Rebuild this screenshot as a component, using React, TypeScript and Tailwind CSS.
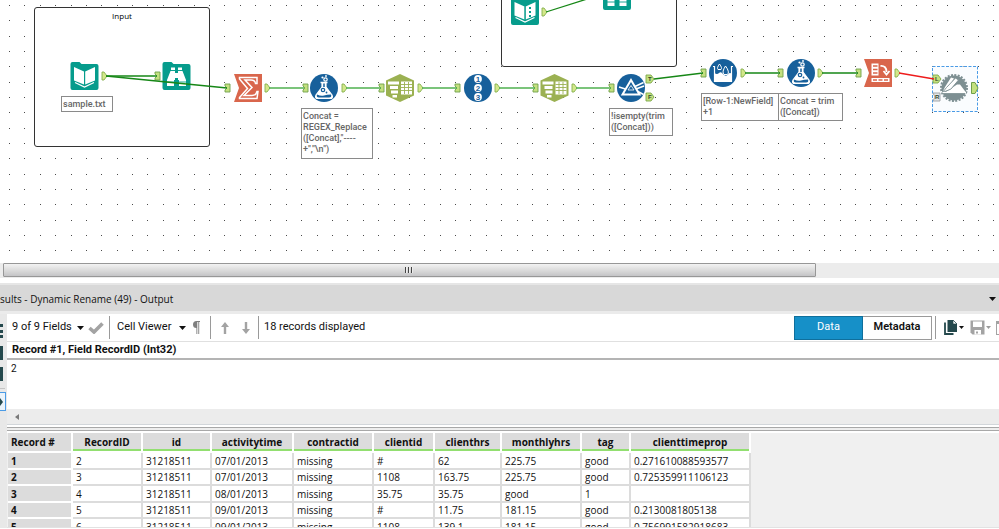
import React from "react";

const range = (n: number) => Array.from({ length: n }, (_, i) => i);

const gridPath = range(130)
  .flatMap((c) => range(17).map((r) => `M${Math.round(9 + c * 15.38)} ${Math.round(5 + r * 15.34)}h1v1h-1z`))
  .join("");

type At = { x: number; y: number };

const InAnchor = ({ x, y }: At) => (
  <path d={`M${x - 4} ${y - 4}h5v8h-5v-2l2-2l-2-2z`} fill="#c3e07f" stroke="#6f9f4a" strokeWidth="0.9" />
);

const OutAnchor = ({ x, y }: At) => (
  <path d={`M${x} ${y - 4}h2l3 4l-3 4h-2z`} fill="#d3e88a" stroke="#86b04e" strokeWidth="0.9" />
);

const Wire = ({ from, to, color = "#4fb04f" }: { from: At; to: At; color?: string }) => (
  <line x1={from.x} y1={from.y} x2={to.x} y2={to.y} stroke={color} strokeWidth="1.3" />
);

const Tool = ({ x, y, children }: At & { children: React.ReactNode }) => (
  <g transform={`translate(${x} ${y})`}>{children}</g>
);

const TealCard = () => (
  <path d="M-14 -12q0-2 2-2h7l2 2h15q2 0 2 2v22q0 2-2 2h-24q-2 0-2-2z" fill="#069c8c" />
);

const BookIcon = ({ x, y, dotted = false }: At & { dotted?: boolean }) => (
  <Tool x={x} y={y}>
    <TealCard />
    <path d="M-10.500 -9L-0.500 -4.500V8.500L-10.500 4.500z M10.500 -9L0.700 -4.500V8.500L10.500 4.500z" fill="#fff" />
    <path d="M-9.500 6.500L0 11L9.500 6.500" fill="none" stroke="#fff" strokeWidth="1.200" />
    <path d="M0 -4.500V8.500" stroke="#069c8c" strokeWidth="0.800" />
    {dotted && <path d="M5 -4V6" stroke="#069c8c" strokeWidth="2" strokeDasharray="2 2" />}
  </Tool>
);

const BinocularsIcon = ({ x, y }: At) => (
  <Tool x={x} y={y}>
    <TealCard />
    <path d="M-5.500 -8.500h4v3h-4z M1.500 -8.500h4v3h-4z" fill="#fff" />
    <path d="M-6 -5h4.500v9h-1v6h-7v-6z M6 -5h-4.500v9h1v6h7v-6z" fill="#fff" />
    <path d="M-2 -3h4v5h-4z" fill="#fff" />
    <path d="M-10 6h8 M2 6h8 M-5.500 -5.500h4 M1.500 -5.500h4" stroke="#069c8c" strokeWidth="0.900" />
  </Tool>
);

const SummarizeIcon = ({ x, y }: At) => (
  <Tool x={x} y={y}>
    <path d="M-14 -14H14V14H-14L-9 0z" fill="#d9664c" />
    <path
      d="M-8.500 -10.500H9V-4.500H7.500Q7 -8 3 -8H-3L4 -0.500L-4 7.500H4Q8 7.500 9 3.500H10L9 10.500H-8.500V9.500L-0.500 0.500L-8.500 -9z"
      fill="#d9664c"
      stroke="#fff"
      strokeWidth="1.500"
    />
  </Tool>
);

const FlaskIcon = ({ x, y }: At) => (
  <Tool x={x} y={y}>
    <circle r="14" fill="#17609b" />
    <path d="M-2 -5V-1L-8 7Q-9.500 10.500 -6 10.500H6Q9.500 10.500 8 7L2 -1V-5z" fill="#fff" stroke="#fff" strokeWidth="1.200" />
    <path d="M-3.500 -5.500H3.500" stroke="#fff" strokeWidth="1.500" />
    <path d="M0 -4.500V-1" stroke="#17609b" strokeWidth="1.500" />
    <path d="M-7 6.500Q-3 8.500 0 7.500T7 6.500Q8 9.500 5 9.500H-5Q-8 9.500 -7 6.500z" fill="#17609b" />
    <circle cx="-1" cy="2" r="1.700" fill="none" stroke="#17609b" strokeWidth="1.200" />
    <circle cx="2.500" cy="4.500" r="0.900" fill="#17609b" />
    <circle cx="1.500" cy="-8.500" r="1.700" fill="none" stroke="#fff" strokeWidth="1.200" />
    <circle cx="-1.500" cy="-10.500" r="1.100" fill="#fff" />
    <circle cx="2" cy="-12" r="0.900" fill="#fff" />
  </Tool>
);

const ParseIcon = ({ x, y }: At) => (
  <Tool x={x} y={y}>
    <path d="M0 -14L14 -7.500V7.500L0 14L-14 7.500V-7.500z" fill="#9bb152" />
    <path d="M-12 -6.500H-1V-3.500H-12z M-10 -2H-2V1H-10z M-9 2.500H-2V5.500H-9z M-7.500 7H-3V9.500H-7.500z" fill="#fff" />
    <path d="M1 -6.500h11v13h-11z" fill="#fff" />
    <path d="M1 -3.500H12 M1 -0.500H12 M1 2.500H12 M4.500 -6V6 M8.500 -6V6" stroke="#9bb152" strokeWidth="0.900" />
  </Tool>
);

const RecordIdIcon = ({ x, y }: At) => (
  <Tool x={x} y={y}>
    <circle r="14" fill="#17609b" />
    {[-9, 0, 9].map((cy, i) => (
      <g key={cy}>
        <circle cy={cy} r="3.900" fill="#fff" />
        <text y={cy + 3} textAnchor="middle" className="fill-[#17609b] font-['Liberation_Sans',sans-serif] text-[8px] font-bold">
          {i + 1}
        </text>
      </g>
    ))}
  </Tool>
);

const FilterIcon = ({ x, y }: At) => (
  <Tool x={x} y={y}>
    <circle r="14" fill="#17609b" />
    <path d="M-12 -1L-4 1.500 M4 -1.500L12.500 -5.500 M5 1L13 -2 M6 3L12.500 6.500" stroke="#fff" strokeWidth="1.500" />
    <path d="M0 -8L8.500 6.500H-8.500z" fill="#17609b" stroke="#fff" strokeWidth="2" />
    <path d="M-3 2L0 -2.500L3 2z" fill="#17609b" stroke="#fff" strokeWidth="0.800" />
  </Tool>
);

const MultiRowIcon = ({ x, y }: At) => (
  <Tool x={x} y={y}>
    <circle r="14" fill="#17609b" />
    <path d="M-10 -6.500H-8.500V8.500H8.500V-6.500H10" fill="none" stroke="#fff" strokeWidth="1.200" />
    <path d="M-8.500 0Q-6 2 -4 0T0 1Q3 4 5 1.500T8.500 1V8.500H-8.500z" fill="#fff" />
    <path d="M-3.500 -9Q-0.500 -5 -2 -3.500H-5Q-6.500 -5 -3.500 -9z" fill="#17609b" stroke="#fff" />
    <path d="M2.500 -7Q7 -1 4.500 1.500H1Q-1.500 -1 2.500 -7z" fill="#17609b" stroke="#fff" />
  </Tool>
);

const CrossTabIcon = ({ x, y }: At) => (
  <Tool x={x} y={y}>
    <path d="M-14 -14H14V14H-14L-9 0z" fill="#d9664c" />
    <path d="M-6.500 -9.500h7v12h-7z M-6.500 5h18v4h-18z" fill="#fff" />
    <path d="M-5 -7h4.500 M-5 -3.500h4.500 M-5 0h4.500 M-5 7h4 M0.500 7h4 M6 7h4" stroke="#d9664c" strokeWidth="1.500" />
    <path d="M2.500 -7Q8.500 -7.500 8.500 -1 M5.500 -2L8.500 1.500L11.500 -2" fill="none" stroke="#fff" strokeWidth="1.800" />
  </Tool>
);

const DynamicRenameIcon = ({ x, y }: At) => (
  <Tool x={x} y={y}>
    <circle r="12.500" fill="#7d8f92" />
    <circle r="13" fill="none" stroke="#7d8f92" strokeWidth="2" strokeDasharray="2 1.400" />
    <path d="M-9 4.500L3 -3.500H6L12 4.500z" fill="#fff" />
    <path d="M-11 3L-9 -1L-3 -10.500L0 -9.500L-7 1z" fill="#fff" />
    <path d="M-11.500 4.500L-7.500 -0.500L1.500 -10L4.500 -8L-3 1z" fill="#fff" stroke="#7d8f92" strokeWidth="0.900" />
    <path d="M-11.500 4.500H12" stroke="#fff" strokeWidth="1.200" />
  </Tool>
);

const LetterAnchor = ({ x, y, letter, gray = false }: At & { letter: string; gray?: boolean }) => (
  <g>
    <path
      d={gray ? `M${x} ${y - 4}h7v8h-7l2-4z` : `M${x} ${y - 4}h5l3 4l-3 4h-5z`}
      fill={gray ? "#e4e6e8" : "#c3e07f"}
      stroke={gray ? "#9a9ea2" : "#7da84a"}
      strokeWidth="0.900"
    />
    <text x={x + 2} y={y + 2} className="fill-[#33472a] font-['Liberation_Sans',sans-serif] text-[6px] font-bold">
      {letter}
    </text>
  </g>
);

const dark = "#168716";

const Workflow = () => (
  <svg className="absolute top-0 left-0 h-full w-full" aria-label="Workflow">
    <rect x="932.500" y="66.500" width="45" height="45" fill="#fafcfe" stroke="#4a9be6" strokeDasharray="3 1.500" />
    <BookIcon x={84.5} y={76} />
    <BinocularsIcon x={176.5} y={76} />
    <BookIcon x={525} y={11} dotted />
    <BinocularsIcon x={617} y={-4} />
    <SummarizeIcon x={248} y={88} />
    <FlaskIcon x={324} y={88} />
    <ParseIcon x={400} y={88} />
    <RecordIdIcon x={478} y={88} />
    <ParseIcon x={554.5} y={88} />
    <FilterIcon x={631} y={88} />
    <MultiRowIcon x={723} y={73} />
    <FlaskIcon x={801} y={73} />
    <CrossTabIcon x={878} y={73} />
    <DynamicRenameIcon x={954} y={88} />
    {[
      [159, 76], [229, 88], [307, 88], [383, 88], [459, 88], [537, 88], [613, 88], [705, 73], [782, 73], [860, 73],
    ].map(([x, y]) => (
      <InAnchor key={x} x={x} y={y} />
    ))}
    {[
      [102, 76], [265, 88], [342, 88], [418, 88], [495, 88], [572, 88], [542, 12], [741, 73], [818, 73], [895, 73],
    ].map(([x, y]) => (
      <OutAnchor key={x} x={x} y={y} />
    ))}
    <LetterAnchor x={646} y={79} letter="T" />
    <LetterAnchor x={646} y={97} letter="F" />
    <LetterAnchor x={933} y={79} letter="L" />
    <LetterAnchor x={933} y={97} letter="R" gray />
    <path d="M971.500 82.500h3.500l3 5.500l-3 5.500h-3.500z" fill="#c3e07f" stroke="#6f9f4a" />
    <Wire from={{ x: 106, y: 76 }} to={{ x: 157, y: 76 }} color={dark} />
    <Wire from={{ x: 106, y: 76 }} to={{ x: 227, y: 88 }} color={dark} />
    <Wire from={{ x: 269, y: 88 }} to={{ x: 304, y: 88 }} />
    <Wire from={{ x: 346, y: 88 }} to={{ x: 381, y: 88 }} />
    <Wire from={{ x: 422, y: 88 }} to={{ x: 457, y: 88 }} />
    <Wire from={{ x: 499, y: 88 }} to={{ x: 535, y: 88 }} />
    <Wire from={{ x: 576, y: 88 }} to={{ x: 611, y: 88 }} />
    <Wire from={{ x: 546, y: 12 }} to={{ x: 603, y: -6 }} color={dark} />
    <Wire from={{ x: 654, y: 79 }} to={{ x: 703, y: 73 }} color={dark} />
    <Wire from={{ x: 745, y: 73 }} to={{ x: 780, y: 73 }} color={dark} />
    <Wire from={{ x: 822, y: 73 }} to={{ x: 858, y: 73 }} color={dark} />
    <Wire from={{ x: 899, y: 73 }} to={{ x: 934, y: 79 }} color="#ee1c1c" />
  </svg>
);

const Note = ({ className, lines }: { className: string; lines: string[] }) => (
  <div
    className={`absolute border border-[#8a8a8a] bg-white pt-[2px] pl-px font-['Roboto',sans-serif] text-[9px] leading-[11px] font-medium whitespace-nowrap text-[#666] ${className}`}
  >
    {lines.map((l) => (
      <div key={l}>{l}</div>
    ))}
  </div>
);

const Canvas = () => (
  <section className="relative h-[263px] overflow-hidden bg-white">
    <svg className="absolute top-0 left-0 h-full w-full" aria-hidden="true">
      <path d={gridPath} fill="#4a4a4a" shapeRendering="crispEdges" />
    </svg>
    <div className="absolute top-[7px] left-[34px] h-[140px] w-[176px] rounded-[3px] border border-[#333] bg-white text-center font-['Open_Sans',sans-serif] text-[8px] leading-[15px] text-black">
      Input
    </div>
    <div className="absolute -top-[73px] left-[501px] h-[140px] w-[176px] rounded-[3px] border border-[#333] bg-white" />
    <Note className="top-[96px] left-[61px] h-[16px] w-[52px]" lines={["sample.txt"]} />
    <Note className="top-[108px] left-[301px] h-[51px] w-[72px]" lines={["Concat =", "REGEX_Replace", '([Concat],"----', '+","\\n")']} />
    <Note className="top-[108px] left-[609px] h-[28px] w-[64px]" lines={["!isempty(trim", "([Concat]))"]} />
    <Note className="top-[93px] left-[701px] h-[28px] w-[82px]" lines={["[Row-1:NewField]", "+1"]} />
    <Note className="top-[93px] left-[778px] h-[28px] w-[65px]" lines={["Concat = trim", "([Concat])"]} />
    <Workflow />
  </section>
);

const Caret = ({ small = false }: { small?: boolean }) => (
  <svg className={`pointer-events-none shrink-0 ${small ? "h-[3px] w-[5px]" : "h-1 w-[7px]"}`} viewBox="0 0 7 4" aria-hidden="true">
    <path d="M0 0h7L3.500 4z" fill="currentColor" />
  </svg>
);

const Separator = () => <div className="h-[23px] w-px shrink-0 bg-[#9a9a9a]" />;

const DropDown = ({ label, text, className }: { label: string; text: string; className: string }) => (
  <div className="flex items-center">
    <select aria-label={label} className={`h-5 appearance-none bg-transparent p-0 outline-none ${className}`}>
      <option>{text}</option>
    </select>
    <Caret />
  </div>
);

const ArrowIcon = ({ down = false }: { down?: boolean }) => (
  <svg className={`h-3 w-2 ${down ? "rotate-180" : ""}`} viewBox="0 0 8 12" aria-hidden="true">
    <path d="M4 0L8 5H5.200V12H2.800V5H0z" fill="#a3a3a3" />
  </svg>
);

const Toolbar = () => (
  <div className="flex h-[28px] items-center border-b border-[#e0e0e0] bg-white pl-[5px]">
    <DropDown label="Fields" text="9 of 9 Fields" className="w-[65px]" />
    <button aria-label="Apply" className="ml-1">
      <svg className="h-3 w-4" viewBox="0 0 16 12" aria-hidden="true">
        <path d="M1.500 6L6 10L14.500 1.500" fill="none" stroke="#a3a3a3" strokeWidth="3.600" />
      </svg>
    </button>
    <div className="w-[5px]" />
    <Separator />
    <div className="w-[7px]" />
    <DropDown label="Viewer" text="Cell Viewer" className="w-[62px]" />
    <button aria-label="Show whitespace" className="mr-[10px] ml-[7px]">
      <svg className="h-[13px] w-[7px]" viewBox="0 0 7 13" aria-hidden="true">
        <path d="M3.500 0H7V1H6.200V13H5.300V1H4.300V13H3.400V7Q0 7 0 3.500Q0 0 3.500 0z" fill="#7f7f7f" />
      </svg>
    </button>
    <Separator />
    <button aria-label="Previous record" className="ml-[10px]">
      <ArrowIcon />
    </button>
    <button aria-label="Next record" className="mr-2 ml-[13px]">
      <ArrowIcon down />
    </button>
    <Separator />
    <span className="ml-[5px] whitespace-nowrap">18 records displayed</span>
    <div className="ml-auto flex h-6">
      <button className="w-[69px] border border-[#0f6f9c] bg-[#1690c8] text-white">Data</button>
      <button className="w-[69px] border border-l-0 border-[#9a9a9a] bg-white font-semibold">Metadata</button>
    </div>
    <div className="w-[3px]" />
    <Separator />
    <button aria-label="Copy" className="ml-2 flex items-center gap-px">
      <svg className="h-[15px] w-[14px]" viewBox="0 0 14 15" aria-hidden="true">
        <path d="M3.500 0H9L13 4V12H3.500z" fill="#24484c" />
        <path d="M9 0V4H13z" fill="#fff" stroke="#24484c" strokeWidth="0.700" />
        <path d="M1 2.500V14H9.500" fill="none" stroke="#24484c" strokeWidth="1.800" />
      </svg>
      <Caret small />
    </button>
    <button aria-label="Save" className="ml-[6px] flex items-center gap-px text-[#9a9a9a]">
      <svg className="h-[15px] w-[15px]" viewBox="0 0 15 15" aria-hidden="true">
        <path d="M0.500 0.500H14.500V14.500H2.500L0.500 12.500z" fill="#a3a3a3" />
        <path d="M3 1.500H12V7H3z M4.500 10H11V14.500H4.500z" fill="#fff" />
        <path d="M6 11.500H8V13.500H6z" fill="#a3a3a3" />
      </svg>
      <Caret small />
    </button>
    <button aria-label="Open window" className="ml-[5px] h-[14px] w-[3px] border border-t-[3px] border-r-0 border-[#a3a3a3]" />
  </div>
);

type Col = { name: string; width: string };

const columns: Col[] = [
  { name: "RecordID", width: "w-[70px]" },
  { name: "id", width: "w-[69px]" },
  { name: "activitytime", width: "w-[82px]" },
  { name: "contractid", width: "w-[80px]" },
  { name: "clientid", width: "w-[61px]" },
  { name: "clienthrs", width: "w-[67px]" },
  { name: "monthlyhrs", width: "w-[80px]" },
  { name: "tag", width: "w-[49px]" },
  { name: "clienttimeprop", width: "w-[120px]" },
];

const rows = [
  ["2", "31218511", "07/01/2013", "missing", "#", "62", "225.75", "good", "0.271610088593577"],
  ["3", "31218511", "07/01/2013", "missing", "1108", "163.75", "225.75", "good", "0.725359911106123"],
  ["4", "31218511", "08/01/2013", "missing", "35.75", "35.75", "good", "1", ""],
  ["5", "31218511", "09/01/2013", "missing", "#", "11.75", "181.15", "good", "0.2130081805138"],
  ["6", "31218511", "09/01/2013", "missing", "1108", "139.1", "181.15", "good", "0.756991582918683"],
];

const DataTable = () => (
  <div className="h-[95px] overflow-hidden border-b border-[#e2e2e2] bg-[#f0f0f0] pl-px">
    <table className="w-[743px] table-fixed border-separate border-spacing-0 font-['Open_Sans','Noto_Sans',sans-serif] text-[10px] leading-[14px] text-[#111]">
      <thead>
        <tr className="h-[20px]">
          <th className="w-[65px] border-r-2 border-b-2 border-white bg-[#dcdcdc] p-0 pl-[3px] text-left font-bold">Record #</th>
          {columns.map((c) => (
            <th key={c.name} className={`border-r-2 border-b-2 border-white bg-[#dcdcdc] p-0 font-bold ${c.width}`}>
              <div className="h-[18px] border-b-2 border-[#92df70] leading-[18px]">{c.name}</div>
            </th>
          ))}
        </tr>
      </thead>
      <tbody>
        {rows.map((r, i) => (
          <tr key={i} className="odd:h-[17px] even:h-[16px]">
            <th className="border-r-2 border-b-2 border-white bg-[#dcdcdc] p-0 pl-[3px] text-left font-bold">{i + 1}</th>
            {r.map((v, j) => (
              <td key={j} className="border-r-2 border-b-2 border-[#dcdcdc] bg-white p-0 pl-[3px]">
                {v}
              </td>
            ))}
          </tr>
        ))}
      </tbody>
    </table>
  </div>
);

const SideRail = () => (
  <nav className="flex w-[7px] shrink-0 flex-col bg-[#e8e8e8] pt-[10px]">
    <button aria-label="Messages" className="flex h-[14px] w-[3px] flex-col justify-between">
      <span className="h-[3px] w-full bg-[#24484c]" />
      <span className="h-[3px] w-full bg-[#24484c]" />
      <span className="h-[3px] w-full bg-[#24484c]" />
    </button>
    <button aria-label="Input" className="mt-2 h-[14px] w-[3px] bg-[#24484c]" />
    <button aria-label="Output" className="mt-[7px] h-[14px] w-[3px] bg-[#24484c]" />
    <div className="mt-[7px] h-px w-[5px] bg-[#c4c4c4]" />
    <button aria-label="Results" className="mt-[3px] flex h-[19px] w-[6px] items-center border border-l-0 border-[#4a9be6] bg-[#eaf3fb]">
      <svg className="h-2 w-[3px]" viewBox="0 0 3 8" aria-hidden="true">
        <path d="M0 0L3 4L0 8z" fill="#24484c" />
      </svg>
    </button>
  </nav>
);

export default function App() {
  return (
    <main className="w-full overflow-hidden bg-white font-['Roboto','Noto_Sans',sans-serif] text-[11px] text-[#111]">
      <Canvas />
      <div className="flex h-[15px] bg-[#ececec] pl-[3px]" role="scrollbar" aria-controls="results" aria-valuenow={0}>
        <div className="flex h-[14px] w-[81.6%] items-center justify-center gap-px rounded-[1px] border border-[#979797] bg-linear-to-b from-[#f3f3f3] via-[#dcdcdc] to-[#c4c4c6]">
          <span className="h-[6px] w-[2px] border-r border-[#eee] bg-[#444]" />
          <span className="h-[6px] w-[2px] border-r border-[#eee] bg-[#444]" />
          <span className="h-[6px] w-[2px] border-r border-[#eee] bg-[#444]" />
        </div>
      </div>
      <section id="results" className="mt-[5px]">
        <header className="flex h-[28px] items-center justify-between border-t-2 border-[#e6e6e6] bg-[#d8d8d8] pt-[2px] pr-[3px]">
          <h2 className="font-['Open_Sans',sans-serif] text-[10px] whitespace-nowrap">sults - Dynamic Rename (49) - Output</h2>
          <button aria-label="Panel menu">
            <Caret />
          </button>
        </header>
        <div className="flex border-t-[3px] border-[#ebebeb]">
          <SideRail />
          <div className="min-w-0 flex-1">
            <Toolbar />
            <div className="flex h-[18px] items-center border-b-2 border-[#b4b4b4] bg-white pl-[5px] font-bold whitespace-nowrap">
              Record #1, Field RecordID (Int32)
            </div>
            <textarea
              aria-label="Cell value"
              readOnly
              defaultValue="2"
              className="block h-[49px] w-full resize-none bg-white pt-[2px] pl-[4px] text-[10px] leading-[14px] outline-none"
            />
            <div className="flex h-[16px] items-center border-b border-[#d2d6da] bg-[#ececec] pl-2">
              <button aria-label="Scroll left">
                <svg className="h-[6px] w-1" viewBox="0 0 4 6" aria-hidden="true">
                  <path d="M4 0V6L0 3z" fill="#7a7a7a" />
                </svg>
              </button>
            </div>
            <div className="my-[2px] h-[4px] border-y border-[#a8a8a8] bg-[#eee]" />
            <DataTable />
          </div>
        </div>
      </section>
    </main>
  );
}
